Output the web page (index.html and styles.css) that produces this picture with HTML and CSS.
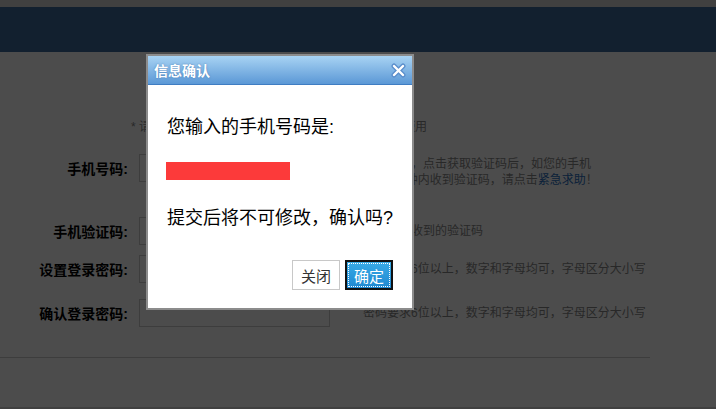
FILE: index.html
```html
<!DOCTYPE html>
<html lang="zh-CN">
<head>
    <meta charset="UTF-8">
    <meta name="viewport" content="width=device-width, initial-scale=1.0">
    <title>注册</title>
    <link rel="stylesheet" href="styles.css">
</head>
<body>

<div class="topbar"></div>
<div class="header"></div>

<div class="main">
    <div class="note">* 请正确填写以下信息，手机号码将作为您登录帐号使用</div>

    <div class="row row-phone">
        <label class="label">手机号码:</label>
        <input type="text" class="field">
        <div class="hint hint-two">输入号码，点击获取验证码后，如您的手机<br>未在1分钟内收到验证码，请点击<a href="#">紧急求助</a>！</div>
    </div>

    <div class="row row-code">
        <label class="label">手机验证码:</label>
        <input type="text" class="field">
        <div class="hint">请输入您收到的验证码</div>
    </div>

    <div class="row row-pwd">
        <label class="label">设置登录密码:</label>
        <input type="password" class="field">
        <div class="hint">密码要求6位以上，数字和字母均可，字母区分大小写</div>
    </div>

    <div class="row row-pwd2">
        <label class="label">确认登录密码:</label>
        <input type="password" class="field">
        <div class="hint">密码要求6位以上，数字和字母均可，字母区分大小写</div>
    </div>
</div>

<div class="divider"></div>
<div class="footer"></div>

<div class="mask"></div>

<div class="dialog">
    <div class="dialog-title">
        <span>信息确认</span>
        <svg class="dialog-close" width="15" height="15" viewBox="0 0 15 15">
            <path d="M3 3 L12 12 M12 3 L3 12" stroke="#5b8fcc" stroke-width="5" stroke-linecap="round"/>
            <path d="M3 3 L12 12 M12 3 L3 12" stroke="#fff" stroke-width="2.4" stroke-linecap="round"/>
        </svg>
    </div>
    <div class="dialog-body">
        <p class="msg">您输入的手机号码是:</p>
        <div class="phone-mask"></div>
        <p class="msg msg-ask">提交后将不可修改，确认吗?</p>
        <div class="dialog-buttons">
            <button class="btn">关闭</button>
            <button class="btn btn-ok">确定</button>
        </div>
    </div>
</div>

</body>
</html>
```

FILE: styles.css
```css
body {
    margin: 0;
    height: 409px;
    overflow: hidden;
    background: #fff;
    font-family: "Liberation Sans", "Noto Sans CJK SC", sans-serif;
}
.topbar {
    height: 7px;
    background: #d6d6d6;
}
.header {
    height: 45px;
    background: #3c6b9d;
}
.main {
    padding-top: 67px;
}
.note {
    padding-left: 131px;
    font-size: 12px;
    line-height: 16px;
    color: #888;
}
.row {
    display: flex;
    align-items: center;
}
.row-phone {
    margin-top: 19px;
    align-items: flex-start;
}
.row-code {
    margin-top: 29px;
}
.row-pwd {
    margin-top: 10px;
}
.row-pwd2 {
    margin-top: 16px;
}
.label {
    width: 128px;
    padding-top: 2px;
    text-align: right;
    font-size: 14px;
    font-weight: bold;
    line-height: 26px;
    color: #000;
}
.field {
    box-sizing: border-box;
    width: 191px;
    height: 28px;
    margin: 0 0 0 11px;
    border: 1px solid #ccc;
    background: #fff;
}
.hint {
    margin-left: 33px;
    font-size: 12px;
    line-height: 16px;
    color: #888;
    white-space: nowrap;
}
.hint-two {
    margin-top: 2px;
}
.hint a {
    color: #2a6fc0;
    text-decoration: none;
}
.divider {
    width: 650px;
    margin-top: 30px;
    border-top: 1px solid #ccc;
}
.footer {
    margin-top: 49px;
    height: 10px;
    background: #d6d6d6;
}

.mask {
    position: fixed;
    top: 0;
    left: 0;
    right: 0;
    bottom: 0;
    background: rgba(0, 0, 0, 0.7);
}
.dialog {
    position: fixed;
    top: 54px;
    left: 146px;
    width: 264px;
    border: 2px solid #8c8c8c;
    background: #fff;
}
.dialog-title {
    display: flex;
    justify-content: space-between;
    align-items: center;
    height: 28px;
    padding: 0 6px 0 6px;
    border-bottom: 1px solid #3f7dc2;
    background: linear-gradient(#a8d3f3, #5b98d6);
    color: #fff;
    font-size: 14px;
    font-weight: bold;
    text-shadow: 0 0 2px rgba(40, 90, 150, 0.6);
}
.dialog-close {
    display: block;
}
.dialog-body {
    height: 176px;
    padding: 29px 19px 18px 19px;
}
.msg {
    margin: 0;
    font-size: 18px;
    line-height: 26px;
    color: #000;
}
.phone-mask {
    width: 124px;
    height: 18px;
    margin: 22px 0 0 -1px;
    background: #fc3a3a;
}
.msg-ask {
    margin-top: 25px;
}
.dialog-buttons {
    display: flex;
    justify-content: flex-end;
    gap: 5px;
    margin-top: 29px;
}
.btn {
    box-sizing: border-box;
    width: 48px;
    height: 30px;
    padding: 0;
    border: 1px solid #c8c8c8;
    background: #fff;
    color: #333;
    font-family: "Liberation Sans", "Noto Sans CJK SC", sans-serif;
    font-size: 15px;
}
.btn-ok {
    border: 2px solid #111;
    background: linear-gradient(#38abe6, #1f88d1);
    color: #fff;
    outline: 1px dotted #fff;
    outline-offset: -4px;
}
```
